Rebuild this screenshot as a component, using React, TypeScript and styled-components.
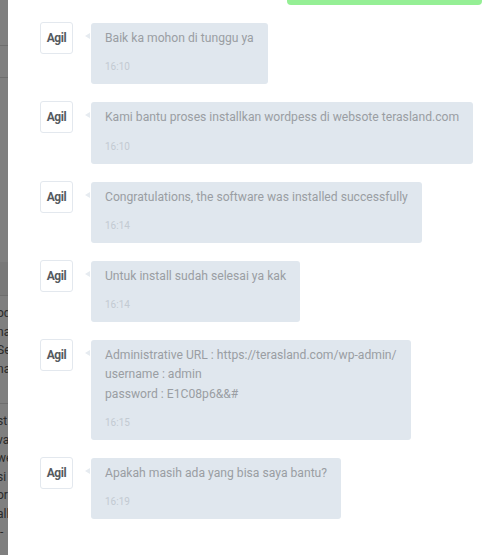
import styled, { createGlobalStyle } from "styled-components";

const GlobalStyle = createGlobalStyle`
  html, body {
    margin: 0;
    padding: 0;
    background: #ffffff;
  }
  body {
    font-family: Roboto, "Liberation Sans", Arial, sans-serif;
  }
`;

const Stage = styled.div`
  display: flex;
  width: 500px;
  height: 555px;
  overflow: hidden;
`;

// page behind the chat window, dimmed by the modal overlay
const Backdrop = styled.div`
  position: relative;
  flex: 0 0 8px;
  overflow: hidden;
  background: #ffffff;

  &::after {
    content: "";
    position: absolute;
    inset: 0;
    background: rgba(0, 0, 0, 0.5);
  }
`;

const BgBlock = styled.div<{ $h: number; $shade?: boolean; $line?: boolean }>`
  height: ${({ $h }) => $h}px;
  background: ${({ $shade }) => ($shade ? "#f2f2f2" : "#ffffff")};
  border-bottom: ${({ $line }) => ($line ? "1px solid #dcdcdc" : "none")};
  box-sizing: border-box;
`;

const BgText = styled.div<{ $gap?: number }>`
  margin-left: -3px;
  padding-top: ${({ $gap }) => $gap ?? 0}px;
  font-size: 12px;
  line-height: 18.5px;
  color: #555555;
  white-space: nowrap;
`;

const ChatPanel = styled.div`
  flex: 1;
  display: flex;
  flex-direction: column;
  gap: 18px;
  background: #ffffff;
`;

const OutgoingTail = styled.div`
  align-self: flex-end;
  width: 195px;
  height: 5px;
  margin-right: 18px;
  background: #95ef95;
  border-radius: 0 0 4px 4px;
`;

const Row = styled.div`
  display: flex;
  align-items: flex-start;
  gap: 18px;
  padding-left: 32px;
`;

const Avatar = styled.div`
  flex: 0 0 auto;
  width: 33px;
  height: 32px;
  margin-top: -1px;
  box-sizing: border-box;
  display: flex;
  align-items: center;
  justify-content: center;
  background: #ffffff;
  border: 1px solid #e3e8ee;
  border-radius: 3px;
  font-size: 12px;
  font-weight: 700;
  letter-spacing: -0.4px;
  color: #555a5f;
`;

const Bubble = styled.div`
  position: relative;
  padding: 6px 14px 10px;
  background: #e0e7ee;
  border-radius: 3px;

  &::before {
    content: "";
    position: absolute;
    left: -6px;
    top: 10px;
    border-style: solid;
    border-width: 3px 5px 3px 0;
    border-color: transparent #e6ebf0 transparent transparent;
  }
`;

const Text = styled.div`
  font-size: 12.15px;
  line-height: 19.3px;
  color: #9a9ea3;
  white-space: pre-line;
`;

const Time = styled.div`
  margin-top: 12px;
  font-size: 10px;
  line-height: 14px;
  color: #c3cad2;
`;

const messages = [
  { text: "Baik ka mohon di tunggu ya", time: "16:10" },
  { text: "Kami bantu proses installkan wordpess di websote terasland.com", time: "16:10" },
  { text: "Congratulations, the software was installed successfully", time: "16:14" },
  { text: "Untuk install sudah selesai ya kak", time: "16:14" },
  {
    text: "Administrative URL : https://terasland.com/wp-admin/\nusername : admin\npassword : E1C08p6&&#",
    time: "16:15",
  },
  { text: "Apakah masih ada yang bisa saya bantu?", time: "16:19" },
];

const bgTop = ["od", "na", "Se", "na"];
const bgBottom = ["st", "va", "we", "si", "or", "all", "l-"];

export default function App() {
  return (
    <>
      <GlobalStyle />
      <Stage>
        <Backdrop>
          <BgBlock $h={46} $line />
          <BgBlock $h={32} $line />
          <BgBlock $h={184} />
          <BgBlock $h={34} $shade $line />
          <BgText $gap={8}>
            {bgTop.map((t, i) => (
              <div key={i}>{t}</div>
            ))}
          </BgText>
          <BgBlock $h={26} $line />
          <BgText $gap={8}>
            {bgBottom.map((t, i) => (
              <div key={i}>{t}</div>
            ))}
          </BgText>
        </Backdrop>
        <ChatPanel>
          <OutgoingTail />
          {messages.map((m, i) => (
            <Row key={i}>
              <Avatar>Agil</Avatar>
              <Bubble>
                <Text>{m.text}</Text>
                <Time>{m.time}</Time>
              </Bubble>
            </Row>
          ))}
        </ChatPanel>
      </Stage>
    </>
  );
}
